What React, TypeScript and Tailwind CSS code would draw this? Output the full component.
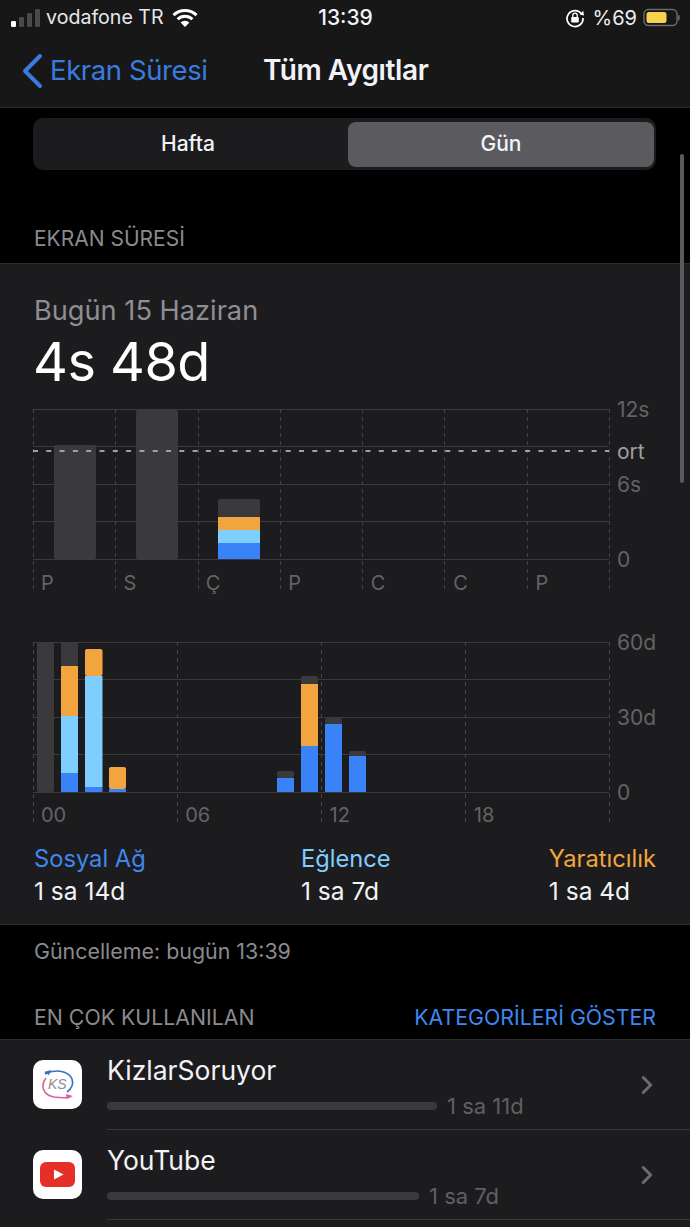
import React from 'react';
import { ChevronRight } from 'lucide-react';

const BLUE = '#3a82f7';
const SKY = '#7fcffe';
const ORANGE = '#f2a53e';
const GRAY = '#3a3a3c';

type Seg = [number, number, string];

// y values are relative to the top of each chart
const WEEK_BARS: { x: number; w: number; segs: Seg[] }[] = [
  { x: 21, w: 42, segs: [[36, 150, GRAY]] },
  { x: 103, w: 42, segs: [[1, 150, GRAY]] },
  { x: 185, w: 42, segs: [[90, 108, GRAY], [108, 121, ORANGE], [121, 134, SKY], [134, 150, BLUE]] },
];

const DAY_BARS: { x: number; w: number; segs: Seg[] }[] = [
  { x: 4, w: 17, segs: [[0, 150, GRAY]] },
  { x: 28, w: 17, segs: [[0, 24, GRAY], [24, 74, ORANGE], [74, 131, SKY], [131, 150, BLUE]] },
  { x: 52, w: 17.5, segs: [[7, 34, ORANGE], [34, 145, SKY], [145, 150, BLUE]] },
  { x: 76, w: 17, segs: [[125, 147, ORANGE], [147, 150, BLUE]] },
  { x: 244, w: 17, segs: [[129, 136, GRAY], [136, 150, BLUE]] },
  { x: 268, w: 17, segs: [[34, 42, GRAY], [42, 104, ORANGE], [104, 150, BLUE]] },
  { x: 292, w: 17, segs: [[76, 82, GRAY], [82, 150, BLUE]] },
  { x: 316, w: 17, segs: [[109, 114, GRAY], [114, 150, BLUE]] },
];

const Chart = ({ bars, verticals, rows, bottom, dashY }: {
  bars: { x: number; w: number; segs: Seg[] }[];
  verticals: number[];
  rows: number[];
  bottom: number;
  dashY?: number;
}) => (
  <svg width="577" height={bottom} className="absolute left-0 top-0">
    {rows.map((y) => (
      <line key={y} x1="0" x2="576" y1={y + 0.5} y2={y + 0.5} stroke="#3a3a3c" strokeWidth="1" />
    ))}
    {verticals.map((x) => (
      <line key={x} x1={x + 0.5} x2={x + 0.5} y1="0" y2={bottom} stroke="#444446" strokeWidth="1" strokeDasharray="4 4" />
    ))}
    {bars.map((b) =>
      b.segs.map(([top, end, color], i) => (
        <rect key={b.x + '-' + i} x={b.x} y={top} width={b.w} height={end - top} fill={color} rx={i === 0 ? 2 : 0} />
      ))
    )}
    {dashY !== undefined && (
      <line x1="0" x2="576" y1={dashY} y2={dashY} stroke="#a0a0a2" strokeWidth="2" strokeDasharray="5 8.3" />
    )}
  </svg>
);

const AppRow = ({ name, time, barWidth, icon }: { name: string; time: string; barWidth: string; icon: React.ReactNode }) => (
  <div className="flex h-[90px] pl-[33px]">
    <div className="mt-[20px] flex h-[49px] w-[49px] shrink-0 items-center justify-center rounded-[10px] bg-white">{icon}</div>
    <div className="ml-[25px] flex flex-1 items-center border-b border-[#38383a]">
      <div className="flex-1">
        <div className="mt-[1px] text-[26.5px] leading-[30px] text-[#f2f2f7]">{name}</div>
        <div className="mt-[11px] flex items-center gap-[10px]">
          <div className={`h-[8px] rounded-full bg-[#3a3a3c] ${barWidth}`} />
          <span className="text-[22px] leading-[20px] text-[#5f5f63]">{time}</span>
        </div>
      </div>
      <ChevronRight className="mr-[28px] text-[#6c6c70]" size={30} strokeWidth={2.4} />
    </div>
  </div>
);

const App: React.FC = () => {
  return (
    <div className="relative h-[1227px] w-[690px] overflow-hidden bg-black font-['Inter',sans-serif] text-white">
      <header className="h-[108px] border-b border-[#2a2a2c] bg-[#171717]">
        <div className="grid h-[36px] grid-cols-[1fr_auto_1fr] items-center pl-[11px] pr-[10px] text-[19.6px]">
          <div className="flex items-center">
            <svg width="32" height="20" viewBox="0 0 32 20" className="mr-[3px]">
              <rect x="0" y="13" width="5" height="6" rx="1.2" fill="#fff" />
              <rect x="8" y="9" width="5" height="10" rx="1.2" fill="#4a4a4c" />
              <rect x="16" y="5" width="5" height="14" rx="1.2" fill="#4a4a4c" />
              <rect x="24" y="1" width="5" height="18" rx="1.2" fill="#4a4a4c" />
            </svg>
            <span className="text-[#e8e8ea]">vodafone TR</span>
            <svg width="26" height="20" viewBox="0 0 26 20" className="ml-[8px]">
              <path d="M1.5 7.2 A16.5 16.5 0 0 1 24.5 7.2" fill="none" stroke="#fff" strokeWidth="3" />
              <path d="M5.6 11.2 A10.6 10.6 0 0 1 20.4 11.2" fill="none" stroke="#fff" strokeWidth="3" />
              <path d="M13 19 L8.6 14.6 A6.2 6.2 0 0 1 17.4 14.6 Z" fill="#fff" />
            </svg>
          </div>
          <div className="text-[21px] font-medium text-[#f2f2f7]">13:39</div>
          <div className="flex items-center justify-end">
            <svg width="20" height="20" viewBox="0 0 20 20" className="mr-[8px]">
              <path d="M16.6 6 A8 8 0 1 0 18 10" fill="none" stroke="#fff" strokeWidth="1.7" />
              <path d="M14.6 6.6 L19 7.4 L18.2 2.8 Z" fill="#fff" />
              <rect x="6.2" y="9" width="7.6" height="5.6" rx="1" fill="#fff" />
              <path d="M7.8 9 V7.4 A2.2 2.2 0 0 1 12.2 7.4 V9" fill="none" stroke="#fff" strokeWidth="1.3" />
            </svg>
            <span className="text-[20px] text-[#ececee]">%69</span>
            <svg width="37" height="20" viewBox="0 0 37 20" className="ml-[6px]">
              <rect x="1" y="1.5" width="33" height="16" rx="4.5" fill="none" stroke="#6a6a6c" strokeWidth="1.4" />
              <rect x="3.5" y="4" width="20" height="11" rx="2.5" fill="#f6d34f" />
              <rect x="35" y="7" width="1.6" height="5.5" rx="0.8" fill="#6a6a6c" />
            </svg>
          </div>
        </div>
        <div className="grid h-[70px] grid-cols-[242px_auto] items-center pl-[21px]">
          <div className="flex items-center text-[#3a7be0]">
            <svg width="22" height="36" viewBox="0 0 22 36" className="mr-[7px]">
              <path d="M19 3 L4 18 L19 33" fill="none" stroke="#3a7be0" strokeWidth="4" strokeLinecap="round" strokeLinejoin="round" />
            </svg>
            <span className="text-[27.5px] tracking-[-0.4px]">Ekran Süresi</span>
          </div>
          <div className="mt-[-2px] text-[28px] font-semibold tracking-[-0.4px] text-[#f2f2f7]">Tüm Aygıtlar</div>
        </div>
      </header>

      <div className="mx-[33px] mt-[10px] flex h-[52px] w-[623px] items-center rounded-[10px] bg-[#1c1c1e] pr-[2px] text-[21px] font-medium">
        <div className="mr-[5px] flex h-[45px] flex-1 items-center justify-center text-[#f2f2f7]">Hafta</div>
        <div className="flex h-[45px] w-[306px] items-center justify-center rounded-[8px] bg-[#5b5b5f] text-[#f2f2f7]">Gün</div>
      </div>

      <div className="flex h-[93px] items-end pb-[12px] pl-[34px] text-[21px] leading-[24px] text-[#8a8a8e]">EKRAN SÜRESİ</div>

      <section className="h-[662px] border-y border-[#2c2c2e] bg-[#1c1c1e] pl-[33px] pr-[34px]">
        <div className="ml-px pt-[30px] text-[27.2px] leading-[34px] text-[#8e8e93]">Bugün 15 Haziran</div>
        <div className="mt-[3px] text-[54px] font-normal leading-[62px] tracking-[-0.5px] text-white">4s 48d</div>

        <div className="relative mt-[16px] h-[183px]">
          <Chart
            bars={WEEK_BARS}
            verticals={[0, 82, 165, 247, 329, 411, 494, 576]}
            rows={[0, 37, 75, 112, 150]}
            bottom={183}
            dashY={42}
          />
          <div className="absolute left-0 top-[162px] grid w-[577px] grid-cols-7 text-[20px] leading-[24px] text-[#636366]">
            {['P', 'S', 'Ç', 'P', 'C', 'C', 'P'].map((d, i) => (
              <span key={i} className="pl-[8px]">{d}</span>
            ))}
          </div>
          <span className="absolute left-[584px] top-[-11px] text-[21px] leading-[24px] text-[#636366]">12s</span>
          <span className="absolute left-[584px] top-[31px] text-[21px] leading-[24px] text-[#a0a0a2]">ort</span>
          <span className="absolute left-[584px] top-[64px] text-[21px] leading-[24px] text-[#636366]">6s</span>
          <span className="absolute left-[584px] top-[139px] text-[21px] leading-[24px] text-[#636366]">0</span>
        </div>

        <div className="relative mt-[50px] h-[183px]">
          <Chart
            bars={DAY_BARS}
            verticals={[0, 144, 288, 432, 576]}
            rows={[0, 37, 75, 112, 150]}
            bottom={183}
          />
          <div className="absolute left-0 top-[161px] grid w-[577px] grid-cols-4 text-[20px] leading-[24px] text-[#636366]">
            {['00', '06', '12', '18'].map((d) => (
              <span key={d} className="pl-[8px]">{d}</span>
            ))}
          </div>
          <span className="absolute left-[584px] top-[-11px] text-[21px] leading-[24px] text-[#636366]">60d</span>
          <span className="absolute left-[584px] top-[64px] text-[21px] leading-[24px] text-[#636366]">30d</span>
          <span className="absolute left-[584px] top-[139px] text-[21px] leading-[24px] text-[#636366]">0</span>
        </div>

        <div className="ml-px mt-[17px] flex justify-between text-[23.7px] leading-[33px]">
          <div className="w-[267px]">
            <div className="text-[#3f88f0]">Sosyal Ağ</div>
            <div className="text-[24.5px] text-[#f2f2f7]">1 sa 14d</div>
          </div>
          <div className="flex-1">
            <div className="text-[#7fcffe]">Eğlence</div>
            <div className="text-[24.5px] text-[#f2f2f7]">1 sa 7d</div>
          </div>
          <div>
            <div className="text-[#f2a53e]">Yaratıcılık</div>
            <div className="text-[24.5px] text-[#f2f2f7]">1 sa 4d</div>
          </div>
        </div>
      </section>

      <div className="pl-[34px] pt-[12px] text-[21.4px] leading-[28px] text-[#8a8a8e]">Güncelleme: bugün 13:39</div>

      <div className="mt-[40px] flex items-center justify-between px-[34px] text-[21.3px] leading-[24px]">
        <span className="text-[#8a8a8e]">EN ÇOK KULLANILAN</span>
        <span className="text-[#3f88f0]">KATEGORİLERİ GÖSTER</span>
      </div>

      <section className="mt-[10px] h-[200px] border-t border-[#2c2c2e] bg-[#1c1c1e]">
        <AppRow
          name="KizlarSoruyor"
          time="1 sa 11d"
          barWidth="w-[330px]"
          icon={
            <svg width="36" height="34" viewBox="0 0 36 34">
              <path d="M5 6 C14 1 28 2 32 11 C34 17 31 21 27 24" fill="none" stroke="#3a6fc0" strokeWidth="1.6" />
              <path d="M4 4 L11 2 L9 7 Z" fill="#3a6fc0" />
              <path d="M6 10 C0 18 3 27 14 29 C21 30 27 30 30 29" fill="none" stroke="#d65fa0" strokeWidth="1.6" />
              <path d="M33 28 L26 26 L27 31 Z" fill="#d65fa0" />
              <text x="8" y="21" fontSize="14" fontStyle="italic" fill="#8d8d92" fontFamily="'Liberation Sans',sans-serif">KS</text>
            </svg>
          }
        />
        <AppRow
          name="YouTube"
          time="1 sa 7d"
          barWidth="w-[312px]"
          icon={
            <svg width="35" height="25" viewBox="0 0 35 25">
              <rect x="0" y="0" width="35" height="25" rx="6" fill="#e5302a" />
              <path d="M14 7.5 L23.5 12.5 L14 17.5 Z" fill="#fff" />
            </svg>
          }
        />
      </section>

      <div className="absolute left-[680px] top-[154px] h-[329px] w-[4px] rounded-full bg-[#5a5a5c]" />
    </div>
  );
};

export default App;
